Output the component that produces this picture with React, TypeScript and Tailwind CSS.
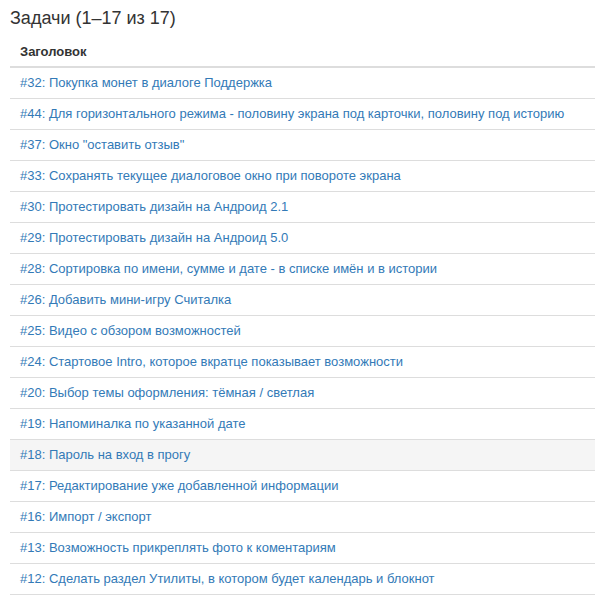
const tasks = [
  "#32: Покупка монет в диалоге Поддержка",
  "#44: Для горизонтального режима - половину экрана под карточки, половину под историю",
  '#37: Окно "оставить отзыв"',
  "#33: Сохранять текущее диалоговое окно при повороте экрана",
  "#30: Протестировать дизайн на Андроид 2.1",
  "#29: Протестировать дизайн на Андроид 5.0",
  "#28: Сортировка по имени, сумме и дате - в списке имён и в истории",
  "#26: Добавить мини-игру Считалка",
  "#25: Видео с обзором возможностей",
  "#24: Стартовое Intro, которое вкратце показывает возможности",
  "#20: Выбор темы оформления: тёмная / светлая",
  "#19: Напоминалка по указанной дате",
  "#18: Пароль на вход в прогу",
  "#17: Редактирование уже добавленной информации",
  "#16: Импорт / экспорт",
  "#13: Возможность прикреплять фото к коментариям",
  "#12: Сделать раздел Утилиты, в котором будет календарь и блокнот",
];

export default function App() {
  return (
    <div className="bg-white pl-[10px] text-[13px] leading-[20px] text-[#333]" style={{ fontFamily: '"Liberation Sans", Arial, sans-serif' }}>
      <h3 className="h-[36px] flex items-center text-[18px] leading-none text-[#333]">Задачи (1–17 из 17)</h3>
      <table className="w-full border-collapse">
        <thead>
          <tr className="border-b-2 border-[#ddd]">
            <th className="text-left font-bold px-[10px] pt-[6px] pb-[4px]">Заголовок</th>
          </tr>
        </thead>
        <tbody>
          {tasks.map((t, i) => (
            <tr key={i} className={`border-b border-[#ddd] ${i === 12 ? 'bg-[#f5f5f5]' : ''}`}>
              <td className="px-[10px] py-[5px]">
                <a className="text-[#337ab7]">{t}</a>
              </td>
            </tr>
          ))}
        </tbody>
      </table>
    </div>
  );
}
